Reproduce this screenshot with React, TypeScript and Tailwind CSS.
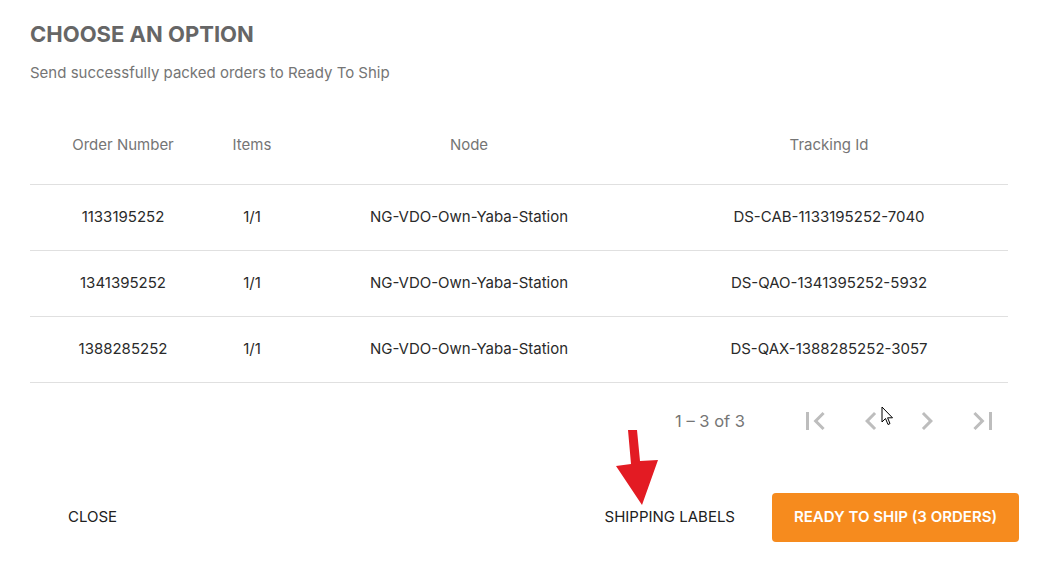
import React from "react";
import { MdFirstPage, MdChevronLeft, MdChevronRight, MdLastPage } from "react-icons/md";

interface Order {
  orderNumber: string;
  items: string;
  node: string;
  trackingId: string;
}

const orders: Order[] = [
  { orderNumber: "1133195252", items: "1/1", node: "NG-VDO-Own-Yaba-Station", trackingId: "DS-CAB-1133195252-7040" },
  { orderNumber: "1341395252", items: "1/1", node: "NG-VDO-Own-Yaba-Station", trackingId: "DS-QAO-1341395252-5932" },
  { orderNumber: "1388285252", items: "1/1", node: "NG-VDO-Own-Yaba-Station", trackingId: "DS-QAX-1388285252-3057" },
];

const cols = ["w-[186px]", "w-[72px]", "w-[362px]", "w-[358px]"];

const App: React.FC = () => {
  return (
    <div className="relative w-[1041px] h-[570px] bg-white font-['Inter',sans-serif] overflow-hidden">
      <div className="pl-[30px] pr-[33px] pt-[20px]">
        <h2 className="text-[22px] leading-7 font-bold text-[#666666]">CHOOSE AN OPTION</h2>
        <p className="mt-[15px] text-[15px] leading-5 text-[#757575]">
          Send successfully packed orders to Ready To Ship
        </p>

        {/* table */}
        <div className="mt-[23px] w-[978px]">
          <div className="flex h-[79px] items-center border-b border-[#e0e0e0] text-[15px] text-[#757575]">
            <div className={`${cols[0]} text-center`}>Order Number</div>
            <div className={`${cols[1]} text-center`}>Items</div>
            <div className={`${cols[2]} text-center`}>Node</div>
            <div className={`${cols[3]} text-center`}>Tracking Id</div>
          </div>
          {orders.map((o) => (
            <div
              key={o.orderNumber}
              className="flex h-[66px] items-center border-b border-[#e0e0e0] text-[15px] text-[#2a2a2a]"
            >
              <div className={`${cols[0]} text-center`}>{o.orderNumber}</div>
              <div className={`${cols[1]} text-center`}>{o.items}</div>
              <div className={`${cols[2]} text-center`}>{o.node}</div>
              <div className={`${cols[3]} text-center`}>{o.trackingId}</div>
            </div>
          ))}
        </div>
      </div>

      {/* pagination */}
      <div className="flex h-[76px] items-center justify-end pr-[30px]">
        <span className="mr-[42px] text-[16.5px] text-[#757575]">1 – 3 of 3</span>
        <button className="flex w-[56px] justify-center text-[#bdbdbd]">
          <MdFirstPage size={36} />
        </button>
        <button className="flex w-[56px] justify-center text-[#bdbdbd]">
          <MdChevronLeft size={36} />
        </button>
        <button className="flex w-[56px] justify-center text-[#bdbdbd]">
          <MdChevronRight size={36} />
        </button>
        <button className="flex w-[56px] justify-center text-[#bdbdbd]">
          <MdLastPage size={36} />
        </button>
      </div>

      {/* footer */}
      <div className="mt-[34px] flex items-center pr-[22px]">
        <button className="ml-[52px] px-4 text-[15px] text-[#212121]">CLOSE</button>
        <button className="ml-auto px-4 text-[15px] text-[#212121]">SHIPPING LABELS</button>
        <button className="ml-[21px] h-[49px] w-[247px] rounded bg-[#f68b1e] text-[15px] font-semibold text-white">
          READY TO SHIP (3 ORDERS)
        </button>
      </div>

      {/* annotation arrow */}
      <svg className="absolute left-[612px] top-[428px]" width="52" height="80" viewBox="0 0 52 80">
        <polygon points="16,2 25,2 28,33 46,32 30,77 4,38 19,36" fill="#e31b23" />
      </svg>

      {/* mouse cursor */}
      <svg className="absolute left-[881px] top-[406px]" width="14" height="22" viewBox="0 0 14 22">
        <path
          d="M1 1 L1 16 L4.5 12.5 L7 18.5 L9 17.6 L6.6 11.8 L11.5 11.8 Z"
          fill="#ffffff"
          stroke="#000000"
          strokeWidth="1"
          strokeLinejoin="round"
        />
      </svg>
    </div>
  );
};

export default App;
